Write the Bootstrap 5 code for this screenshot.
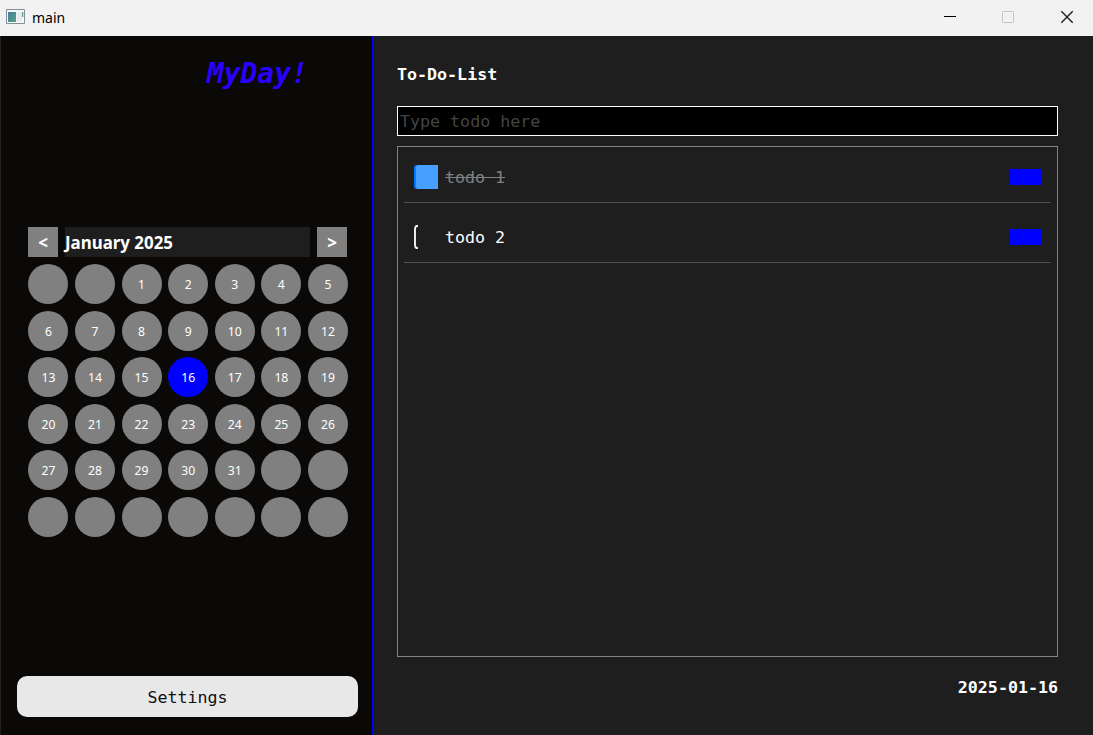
<!DOCTYPE html>
<html lang="en">
<head>
<meta charset="utf-8">
<title>main</title>
<link href="https://cdn.jsdelivr.net/npm/bootstrap@5.3.0/dist/css/bootstrap.min.css" rel="stylesheet">
<style>
body{height:735px;font-family:"DejaVu Sans Mono",monospace;font-size:16.65px;line-height:20px;background:#1e1e1e;color:#fff;overflow:hidden}
.titlebar{height:36px;background:#f2f2f2;color:#000;padding:0 20px 2px 6px;font-family:"Noto Sans",sans-serif;font-size:14px}
.titlebar .caption{margin-left:6px;padding-top:1px}
.sidebar{width:374px;background:#0a0907;border-left:1px solid #202020;border-right:2px solid #00f;padding:20px 14px 18px 16px}
.brand{font-size:27.9px;line-height:36px;color:#2a00ff;padding-left:190px;height:171px}
.calendar{padding-left:11px;width:331px}
.month-row{gap:7px;font-family:"Noto Sans",sans-serif;height:30px;margin-bottom:7px}
.step{width:30px;height:30px;border:0;padding:0;background:#808080;color:#fff;font-weight:700;font-size:17px;line-height:32px}
.month{width:245px;background:#1e1e1e;font-weight:700;font-size:16.9px;line-height:32px;white-space:nowrap}
.days{display:grid;grid-template-columns:repeat(7,40px);gap:6.62px 6.6px;padding-left:.4px;font-family:"Noto Sans",sans-serif;font-size:12.2px}
.day{width:40px;height:40px;border-radius:50%;background:#808080;line-height:41px;text-align:center}
.today{background:#00f}
.settings{height:41px;background:#e8e8e8;color:#111;border:0;border-radius:10px;padding:2px 0 0}
.main{padding:29px 35px 36px 23px}
.entry{height:30px;background:#000;border:1px solid #fff;border-radius:0;padding:0 2px;margin:21px 0 10px;color:#fff;outline:0}
.entry::placeholder{color:#444;opacity:1}
.todos{border:1px solid #80838c;padding:6px;height:511px;margin-bottom:21px}
.todo{height:50px;border-bottom:1px solid #505050;padding:0 9px 1px 10px}
.todo + .todo{margin-top:10px}
.todo span{padding-top:2px}
.check{width:24px;height:24px;margin-right:7px}
.delete{width:32px;height:16px;background:#00f;border:0;padding:0}
</style>
</head>
<body class="d-flex flex-column">
<header class="titlebar d-flex align-items-center flex-shrink-0">
  <svg width="20" height="16" viewBox="0 0 20 16"><defs><linearGradient id="g" x2="1" y2="1"><stop stop-color="#4b79a8"/><stop offset="1" stop-color="#55a779"/></linearGradient></defs><path d="M.5.5h18v14H.5z" fill="#f7f7f7" stroke="#858d99"/><path d="M2 3h8v10H2z" fill="url(#g)"/><path d="M11 3h5v10h-5z" fill="#e8ebee"/><path d="M16 3h1.3v5H16z" fill="#55a08d"/></svg>
  <span class="caption">main</span>
  <svg class="ms-auto" width="130" height="16" viewBox="0 0 130 16" fill="none"><path d="M1 7.5h12" stroke="#000"/><rect x="59.5" y="2.5" width="11" height="11" rx="1" stroke="#c4c4c4"/><path d="m118.3 2.3 11.4 11.4m0-11.4-11.4 11.4" stroke="#222" stroke-width="1.4"/></svg>
</header>
<div class="d-flex flex-grow-1">
  <aside class="sidebar d-flex flex-column flex-shrink-0">
    <div class="brand fw-bold fst-italic">MyDay!</div>
    <section class="calendar">
      <div class="month-row d-flex"><button class="step">&lt;</button><div class="month">January 2025</div><button class="step">&gt;</button></div>
      <div class="days" id="days"></div>
    </section>
    <button class="settings mt-auto w-100">Settings</button>
  </aside>
  <main class="main d-flex flex-column flex-grow-1">
    <div class="fw-bold">To-Do-List</div>
    <input class="entry w-100 flex-shrink-0" placeholder="Type todo here">
    <div class="todos">
      <div class="todo d-flex align-items-center">
        <svg class="check" viewBox="0 0 24 24"><path d="M3 0h21v24H3q-3 0-3-3V3q0-3 3-3" fill="#007bff"/><path d="M4 0h20v24H4q-2 0-2-3V3q0-3 2-3" fill="#46a0ff"/></svg>
        <span class="text-decoration-line-through" style="color:#808080">todo 1</span><button class="delete ms-auto" aria-label="Delete"></button>
      </div>
      <div class="todo d-flex align-items-center">
        <svg class="check" viewBox="0 0 24 24"><path d="M4 .7Q1 .7 1 4v16q0 3.3 3 3.3" fill="none" stroke="#f4f4f4" stroke-width="1.9"/></svg>
        <span>todo 2</span><button class="delete ms-auto" aria-label="Delete"></button>
      </div>
    </div>
    <div class="fw-bold text-end">2025-01-16</div>
  </main>
</div>
<script>
const days = document.getElementById('days');
for (let i = -1; i <= 40; i++) {
  const d = document.createElement('div');
  d.className = 'day' + (i === 16 ? ' today' : '');
  if (i > 0 && i <= 31) d.textContent = i;
  days.append(d);
}
</script>
<script src="https://cdn.jsdelivr.net/npm/bootstrap@5.3.0/dist/js/bootstrap.bundle.min.js"></script>
</body>
</html>
